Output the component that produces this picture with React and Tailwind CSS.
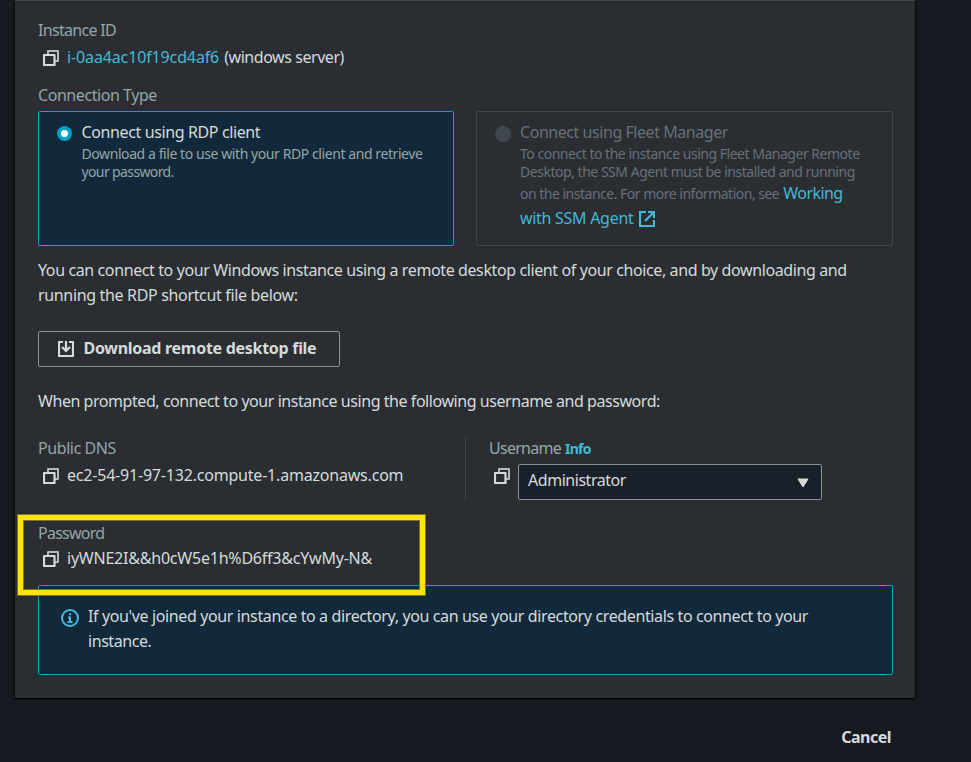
function CopyIcon() {
  return (
    <svg width="16" height="16" viewBox="0 0 16 16" fill="none" stroke="#d5dbdb" strokeWidth="2" className="block shrink-0">
      <path d="M5 4V1h10v10h-3" stroke="#b4b9ba" strokeLinejoin="round" />
      <path d="M1 5h10.500v10H1z" strokeWidth="2.200" strokeLinejoin="round" />
    </svg>
  )
}

function ExternalIcon() {
  return (
    <svg width="16" height="16" viewBox="0 0 16 16" fill="none" stroke="#44b9d6" strokeWidth="2.200" className="mt-[5px] ml-1.5 block shrink-0">
      <path d="M7 1H1v14h14V9" />
      <path d="M9 1h6v6M15 1L6 10" />
    </svg>
  )
}

function DownloadIcon() {
  return (
    <svg width="16" height="16" viewBox="0 0 16 16" fill="none" stroke="#d5dbdb" strokeWidth="2.200" className="block shrink-0">
      <path d="M5 1H1v14h14V1h-4" strokeLinejoin="round" />
      <path d="M8 0v10M4 6l4 4 4-4" />
    </svg>
  )
}

function InfoIcon() {
  return (
    <svg width="18" height="18" viewBox="0 0 18 18" fill="none" stroke="#44b9d6" strokeWidth="2" className="block shrink-0">
      <circle cx="9" cy="9" r="8" />
      <path d="M7 8.500h3M9 8v5M6.500 13h5M8 5.200h2" />
    </svg>
  )
}

function Label({ children, className }) {
  return <div className={`h-[25px] text-[#95a5a6] ${className}`}>{children}</div>
}

export default function App() {
  return (
    <div className="h-[762px] w-[971px] overflow-hidden bg-[#16191f] pl-[15px] font-['Noto_Sans','Open_Sans',sans-serif] text-base leading-[25px] whitespace-nowrap text-[#d5dbdb]">
      <main className="relative h-[698px] w-[900px] border-t border-[#414750] bg-[#2a2e33] pt-[17px] pr-[22px] pl-[23px] shadow-[0_1px_1px_0_rgba(0,0,0,0.8),1px_1px_1px_0_rgba(0,0,0,0.5),-1px_1px_1px_0_rgba(0,0,0,0.5)]">
        <section className="h-[65px]">
          <Label className="tracking-[-0.7px]">Instance ID</Label>
          <div className="mt-0.5 flex pl-[5px]">
            <div className="mt-[5px]">
              <CopyIcon />
            </div>
            <a className="ml-2 tracking-[-0.13px] text-[#44b9d6]">i-0aa4ac10f19cd4af6</a>
            <span className="ml-[5px] tracking-[-0.44px]">(windows server)</span>
          </div>
        </section>

        <section>
          <Label className="tracking-[-0.44px]">Connection Type</Label>
          <div className="mt-[3px] grid h-[135px] grid-cols-[416px_417px] gap-[22px]">
            <div className="flex rounded-[2px] border border-[#00a1c9] bg-[#12293b] pt-2 pl-[18px]">
              <span className="mt-1.5 flex size-[15px] shrink-0 items-center justify-center rounded-full bg-[#00a1c9]">
                <span className="size-[7px] rounded-full bg-white" />
              </span>
              <div className="ml-[9.5px]">
                <div className="tracking-[-0.38px]">Connect using RDP client</div>
                <div className="text-sm leading-[18px] text-[#95a5a6]">
                  <div className="tracking-[-0.42px]">Download a file to use with your RDP client and retrieve</div>
                  <div className="tracking-[-0.62px]">your password.</div>
                </div>
              </div>
            </div>

            <div className="flex rounded-[2px] border border-[#414750] pt-2 pl-[18px] text-[#687078]">
              <span className="mt-1.5 size-4 shrink-0 rounded-full bg-[#414750]" />
              <div className="ml-[9px]">
                <div className="tracking-[-0.45px]">Connect using Fleet Manager</div>
                <div className="text-sm leading-[18px]">
                  <div className="tracking-[-0.485px]">To connect to the instance using Fleet Manager Remote</div>
                  <div className="tracking-[-0.475px]">Desktop, the SSM Agent must be installed and running</div>
                </div>
                <div className="flex items-baseline">
                  <span className="text-sm leading-[25px] tracking-[-0.5px]">on the instance. For more information, see</span>
                  <a className="ml-1 tracking-[-0.56px] text-[#44b9d6]">Working</a>
                </div>
                <a className="flex tracking-[-0.29px] text-[#44b9d6]">
                  with SSM Agent
                  <ExternalIcon />
                </a>
              </div>
            </div>
          </div>
        </section>

        <p className="mt-3">
          <span className="block tracking-[-0.39px]">
            You can connect to your Windows instance using a remote desktop client of your choice, and by downloading and
          </span>
          <span className="block tracking-[-0.34px]">running the RDP shortcut file below:</span>
        </p>

        <button className="mt-[23px] flex h-9 w-[302px] items-center rounded-[2px] border border-[#879596] pl-[19px] font-bold">
          <DownloadIcon />
          <span className="mb-px ml-[9.5px] tracking-[-0.286px]">Download remote desktop file</span>
        </button>

        <p className="mt-[22px] tracking-[-0.444px]">
          When prompted, connect to your instance using the following username and password:
        </p>

        <div className="mt-[23px] flex h-[63px]">
          <div className="w-[428px] border-r border-[#414750]">
            <Label className="-mt-px tracking-[-0.42px]">Public DNS</Label>
            <div className="mt-0.5 flex pl-[5px]">
              <div className="mt-[5px]">
                <CopyIcon />
              </div>
              <span className="ml-2 tracking-[-0.2px]">ec2-54-91-97-132.compute-1.amazonaws.com</span>
            </div>
          </div>
          <div className="pl-[23px]">
            <Label className="-mt-px flex items-baseline">
              <span className="tracking-[-0.74px]">Username</span>
              <a className="ml-1 text-sm font-bold tracking-[-0.7px] text-[#44b9d6]">Info</a>
            </Label>
            <div className="mt-[3px] flex">
              <div className="mt-1 ml-[5px]">
                <CopyIcon />
              </div>
              <div className="ml-2 flex h-9 w-[304px] items-center justify-between rounded-[2px] border border-[#879596] bg-[#1a2029] pr-3 pb-[3px] pl-[9px]">
                <span className="tracking-[-0.46px]">Administrator</span>
                <svg width="12" height="10" viewBox="0 0 12 10" fill="#d5dbdb" stroke="#d5dbdb" strokeLinejoin="round" className="mt-[5px]">
                  <path d="M1 1h10L6 9z" />
                </svg>
              </div>
            </div>
          </div>
        </div>

        <section className="mt-[21px]">
          <Label className="tracking-[-0.74px]">Password</Label>
          <div className="flex pl-[5px]">
            <div className="mt-[5px]">
              <CopyIcon />
            </div>
            <span className="ml-2 tracking-[-0.22px]">iyWNE2I&amp;&amp;h0cW5e1h%D6ff3&amp;cYwMy-N&amp;</span>
          </div>
        </section>

        <aside className="mt-[14px] flex h-[90px] rounded-[2px] border border-[#00a1c9] bg-[#12293b] pt-[18px] pl-[22px]">
          <div className="mt-[5px]">
            <InfoIcon />
          </div>
          <p className="ml-[9px]">
            <span className="block tracking-[-0.375px]">
              If you've joined your instance to a directory, you can use your directory credentials to connect to your
            </span>
            <span className="block tracking-[-0.44px]">instance.</span>
          </p>
        </aside>

        <div className="absolute top-[513px] left-[2px] h-[82px] w-[409px] border border-[#80751c]">
          <div className="h-full w-full border-[5px] border-[#ffe600]">
            <div className="h-full w-full border border-[#80751c]" />
          </div>
        </div>
      </main>

      <footer className="flex w-[876px] justify-end pt-[27px] font-bold">
        <button className="tracking-[-0.5px]">Cancel</button>
      </footer>
    </div>
  )
}
